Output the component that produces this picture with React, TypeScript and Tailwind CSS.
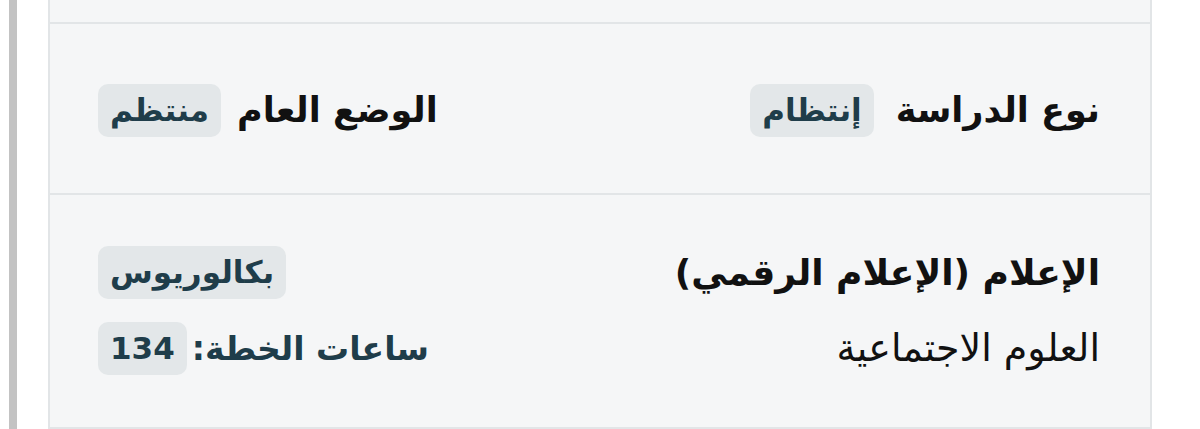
import React from 'react';

function Badge({ children }: { children: React.ReactNode }) {
  return (
    <span className="inline-flex h-[53px] items-center rounded-[10px] bg-[#e3e7e9] px-[12px] text-[31px] font-semibold text-[#1f3d4a]">
      {children}
    </span>
  );
}

export default function App() {
  return (
    <div
      className="flex h-[429px] w-[1200px] bg-white"
      style={{ fontFamily: '"DejaVu Sans", "Noto Sans", sans-serif' }}
    >
      <div className="ml-[9px] w-[8px] bg-[#c3c3c3]" />
      <div dir="rtl" className="ml-[31px] flex w-[1104px] flex-col border-x-2 border-[#e2e5e7] bg-[#f5f6f7]">
        <div className="h-[24px] border-b-2 border-[#e2e5e7]" />

        <div className="flex h-[171px] items-center justify-between border-b-2 border-[#e2e5e7] pl-[48px] pr-[50px] pt-[4px]">
          <div className="flex items-center gap-[22px]">
            <span className="text-[35px] font-bold text-[#111]">نوع الدراسة</span>
            <Badge>إنتظام</Badge>
          </div>
          <div className="flex items-center gap-[16px]">
            <span className="text-[35px] font-bold text-[#111]">الوضع العام</span>
            <Badge>منتظم</Badge>
          </div>
        </div>

        <div className="flex flex-1 justify-between border-b-2 border-[#e2e5e7] pl-[48px] pr-[50px] pt-[51px]">
          <div className="flex flex-col gap-[23px]">
            <span className="flex h-[53px] items-center text-[36px] font-bold text-[#111]">الإعلام (الإعلام الرقمي)</span>
            <span className="flex h-[53px] items-center text-[38px] text-[#111]">العلوم الاجتماعية</span>
          </div>
          <div className="flex flex-col items-end gap-[23px]">
            <Badge>بكالوريوس</Badge>
            <div className="flex items-center gap-[5px]">
              <span className="text-[33px] font-semibold text-[#1f3d4a]">ساعات الخطة:</span>
              <Badge>134</Badge>
            </div>
          </div>
        </div>
      </div>
    </div>
  );
}
